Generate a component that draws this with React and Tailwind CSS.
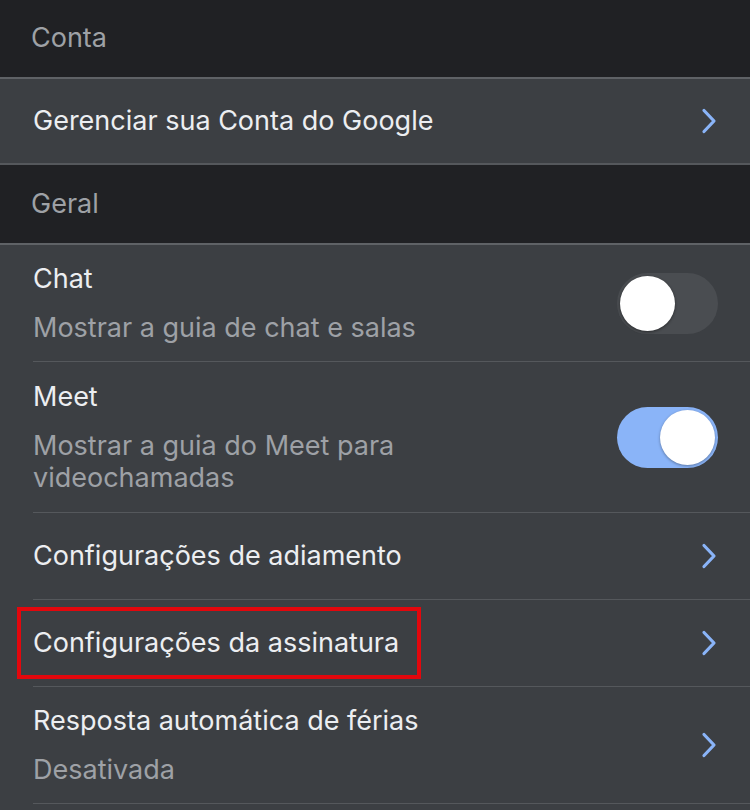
import React from "react";

const Chevron = () => (
  <svg width="18" height="28" viewBox="0 0 18 28" fill="none" className="shrink-0">
    <path
      d="M4 3.5 L14 14 L4 24.5"
      stroke="#8ab4f8"
      strokeWidth="3.2"
      strokeLinecap="round"
      strokeLinejoin="round"
    />
  </svg>
);

const Toggle = ({ on }) =>
  on ? (
    <div className="w-[101px] h-[61px] rounded-full bg-[#8ab4f8] flex items-center justify-end pr-[3px] shrink-0">
      <div className="w-[55px] h-[55px] rounded-full bg-white shadow-[0_1px_3px_rgba(0,0,0,0.35)]" />
    </div>
  ) : (
    <div className="w-[101px] h-[61px] rounded-full bg-[#4a4d51] flex items-center pl-[3px] shrink-0">
      <div className="w-[55px] h-[55px] rounded-full bg-white shadow-[0_1px_3px_rgba(0,0,0,0.45)]" />
    </div>
  );

const SectionHeader = ({ title, height }) => (
  <div
    className={`bg-[#202124] border-b-2 border-[#5f6266] pl-[31px] flex items-center ${height}`}
  >
    <span className="text-[27px] text-[#9ea1a6]">{title}</span>
  </div>
);

const Row = ({ title, subtitle, right, last, highlight, height }) => (
  <div className="pl-[33px] bg-[#3c3f43]">
    <div
      className={`flex items-center pr-[32px] ${height} ${
        last ? "" : "border-b border-[#55585c]"
      }`}
    >
      <div className="flex-1 min-w-0 relative">
        {highlight && (
          <div className="absolute left-[-16px] top-[-20px] w-[404px] h-[72px] border-[4px] border-[#e3070d]" />
        )}
        <div className="text-[27px] leading-[32px] text-[#eceef1]">{title}</div>
        {subtitle && (
          <div className="mt-[17px] text-[27px] leading-[32px] text-[#9ea1a6] max-w-[420px]">
            {subtitle}
          </div>
        )}
      </div>
      {right}
    </div>
  </div>
);

export default function App() {
  return (
    <div
      className="w-[750px] h-[810px] overflow-hidden bg-[#3c3f43]"
      style={{ fontFamily: "Inter, 'Liberation Sans', sans-serif" }}
    >
      <SectionHeader title="Conta" height="h-[79px]" />
      <div className="bg-[#3c3f43] border-b-2 border-[#55585c] h-[86px] flex items-center pl-[33px] pr-[32px]">
        <div className="flex-1 text-[27px] leading-[32px] text-[#eceef1]">
          Gerenciar sua Conta do Google
        </div>
        <Chevron />
      </div>
      <SectionHeader title="Geral" height="h-[80px]" />
      <Row
        title="Chat"
        subtitle="Mostrar a guia de chat e salas"
        right={<Toggle on={false} />}
        height="h-[117px]"
      />
      <Row
        title="Meet"
        subtitle="Mostrar a guia do Meet para videochamadas"
        right={<Toggle on />}
        height="h-[151px]"
      />
      <Row title="Configurações de adiamento" right={<Chevron />} height="h-[87px]" />
      <Row
        title="Configurações da assinatura"
        right={<Chevron />}
        height="h-[87px]"
        highlight
      />
      <Row
        title="Resposta automática de férias"
        subtitle="Desativada"
        right={<Chevron />}
        height="h-[117px]"
      />
    </div>
  );
}
